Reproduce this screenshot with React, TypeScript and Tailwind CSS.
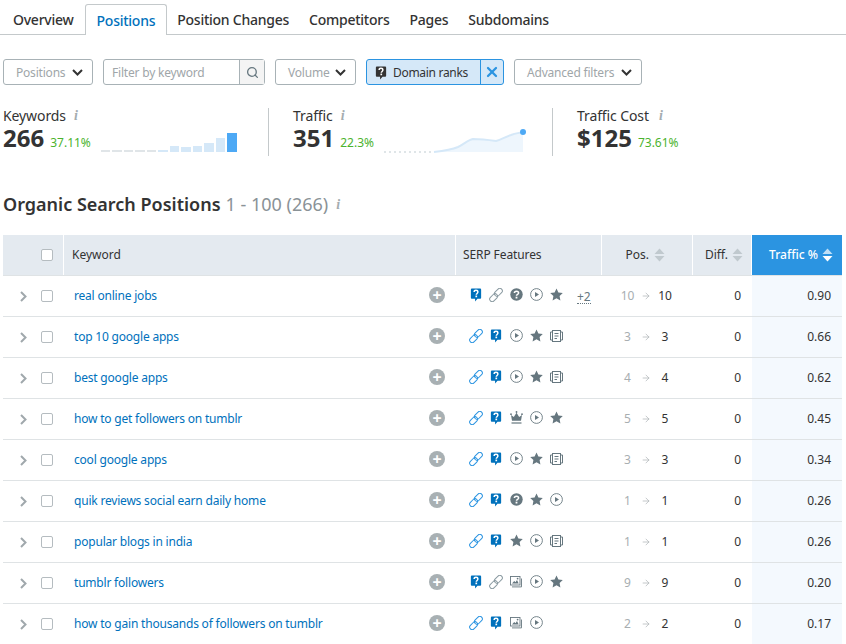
import { ArrowRight, Search, X } from "lucide-react";

type Feature = "link" | "linkOn" | "bubble" | "help" | "play" | "star" | "news" | "image" | "crown";

const rows: { keyword: string; features: Feature[]; more?: string; from: number; to: number; traffic: string }[] = [
  { keyword: "real online jobs", features: ["bubble", "link", "help", "play", "star"], more: "+2", from: 10, to: 10, traffic: "0.90" },
  { keyword: "top 10 google apps", features: ["linkOn", "bubble", "play", "star", "news"], from: 3, to: 3, traffic: "0.66" },
  { keyword: "best google apps", features: ["linkOn", "bubble", "play", "star", "news"], from: 4, to: 4, traffic: "0.62" },
  { keyword: "how to get followers on tumblr", features: ["linkOn", "bubble", "crown", "play", "star"], from: 5, to: 5, traffic: "0.45" },
  { keyword: "cool google apps", features: ["linkOn", "bubble", "play", "star", "news"], from: 3, to: 3, traffic: "0.34" },
  { keyword: "quik reviews social earn daily home", features: ["linkOn", "bubble", "help", "star", "play"], from: 1, to: 1, traffic: "0.26" },
  { keyword: "popular blogs in india", features: ["linkOn", "bubble", "star", "play", "news"], from: 1, to: 1, traffic: "0.26" },
  { keyword: "tumblr followers", features: ["bubble", "link", "image", "play", "star"], from: 9, to: 9, traffic: "0.20" },
  { keyword: "how to gain thousands of followers on tumblr", features: ["linkOn", "bubble", "image", "play"], from: 2, to: 2, traffic: "0.17" },
];

const bars = [2, 2, 2, 2, 2, 2, 6, 5, 6, 9, 14, 19];

function BubbleIcon({ color = "#0071bc" }: { color?: string }) {
  return (
    <svg width="12" height="14" viewBox="0 0 12 15">
      <path d="M1.5 0.5h9a1 1 0 0 1 1 1v9a1 1 0 0 1-1 1H7.6L5 14.5v-3H1.5a1 1 0 0 1-1-1V1.5a1 1 0 0 1 1-1z" fill={color} />
      <path d="M4 4.4c0-2.5 4-2.5 4 0 0 1.5-1.7 1.5-1.7 2.9" fill="none" stroke="#fff" strokeWidth="1.6" />
      <rect x="5.4" y="8.1" width="1.8" height="1.8" fill="#fff" />
    </svg>
  );
}

function FeatureIcon({ name }: { name: Feature }) {
  const grey = "#66777f";
  if (name === "bubble") return <BubbleIcon />;
  if (name === "link" || name === "linkOn") {
    const color = name === "linkOn" ? "#2b94e1" : "#8a9aa1";
    return (
      <svg width="14" height="14" viewBox="0 0 14 14" fill="none" stroke={color} strokeWidth="1">
        <rect x="6.9" y="-0.2" width="5" height="9" rx="2.5" transform="rotate(45 9.4 4.3)" />
        <rect x="2.1" y="5.2" width="5" height="9" rx="2.5" transform="rotate(45 4.6 9.7)" />
      </svg>
    );
  }
  if (name === "help") {
    return (
      <svg width="13" height="13" viewBox="0 0 13 13">
        <circle cx="6.5" cy="6.5" r="6.2" fill={grey} />
        <path d="M4.4 5c0-2.5 4.2-2.5 4.2 0 0 1.5-2.1 1.4-2.1 2.8" fill="none" stroke="#fff" strokeWidth="1.5" />
        <rect x="5.6" y="8.7" width="1.8" height="1.8" fill="#fff" />
      </svg>
    );
  }
  if (name === "play") {
    return (
      <svg width="13" height="13" viewBox="0 0 13 13">
        <circle cx="6.5" cy="6.5" r="5.9" fill="none" stroke={grey} strokeWidth="0.9" />
        <path d="M5 4l4 2.5-4 2.5z" fill={grey} />
      </svg>
    );
  }
  if (name === "star") {
    return (
      <svg width="13" height="13" viewBox="0 0 13 13">
        <path d="M6.5 0.4l1.9 4 4.4 0.6-3.2 3 0.8 4.5-3.9-2.2-3.9 2.2 0.8-4.5-3.2-3 4.4-0.6z" fill={grey} />
      </svg>
    );
  }
  if (name === "news") {
    return (
      <svg width="13" height="12" viewBox="0 0 13 12" fill="none" stroke={grey} strokeWidth="1">
        <rect x="2.5" y="0.5" width="8" height="11" />
        <path d="M2.5 2H0.5v8h2M10.5 2h2v8h-2M4.5 3.5h4M4.5 6h4M4.5 8.5h2.5" />
      </svg>
    );
  }
  if (name === "image") {
    return (
      <svg width="12" height="12" viewBox="0 0 12 12" fill="none" stroke={grey} strokeWidth="0.9">
        <rect x="0.5" y="0.5" width="9.5" height="8.5" />
        <path d="M2 7.5l2.2-2.5 1.3 1.3 1.5-2.3 1.7 3.5z" fill={grey} stroke="none" />
        <circle cx="7.6" cy="2.6" r="0.9" fill={grey} stroke="none" />
        <path d="M2 10.9h9.5V2.5" />
      </svg>
    );
  }
  return (
    <svg width="13" height="13" viewBox="0 0 13 13" fill={grey}>
      <path d="M2 9.8L1 4l2.8 2L6.5 1.8 9.2 6 12 4l-1 5.8z" />
      <circle cx="1" cy="3.2" r="0.9" />
      <circle cx="6.5" cy="1" r="0.9" />
      <circle cx="12" cy="3.2" r="0.9" />
      <rect x="1.5" y="11.4" width="10" height="1.2" />
    </svg>
  );
}

function InfoMark() {
  return <span className="font-['Liberation_Serif',serif] text-[14px] font-bold italic leading-none text-[#a4acb0]">i</span>;
}

function SortArrows({ active }: { active?: boolean }) {
  const color = active ? "#ffffff" : "#c0c9ce";
  return (
    <svg width="11" height="14" viewBox="0 0 11 14" className="shrink-0">
      <path d="M5.5 0.5L10.5 6H0.5z" fill={color} opacity={active ? 0.7 : 1} />
      <path d="M5.5 13.5L10.5 8H0.5z" fill={color} />
    </svg>
  );
}

function Chevron() {
  return (
    <svg width="11" height="7" viewBox="0 0 11 7" fill="none" stroke="#333" strokeWidth="2" className="shrink-0">
      <path d="M1 1l4.5 4.5L10 1" />
    </svg>
  );
}

function Select({ label, width }: { label: string; width: string }) {
  return (
    <div className={`flex h-[26px] items-center justify-between whitespace-nowrap rounded-[3px] border border-[#a8b2b6] pl-3 pr-[9px] ${width}`}>
      <span className="pt-px text-[12px] tracking-[-0.2px] text-[#a0a6a9]">{label}</span>
      <Chevron />
    </div>
  );
}

function Metric({ label, value, pct, gap }: { label: string; value: string; pct: string; gap: string }) {
  return (
    <div className="mb-1 flex flex-col">
      <div className={`flex h-[16px] items-center text-[14px] leading-none tracking-[-0.1px] text-[#333] ${gap}`}>
        <span>{label}</span>
        <InfoMark />
      </div>
      <div className="mt-px flex items-baseline gap-[6px]">
        <span className="text-[24px] font-bold leading-[26px] text-[#333]">{value}</span>
        <span className="text-[12px] text-[#4bb32e]">{pct}</span>
      </div>
    </div>
  );
}

function Tab({ label, active }: { label: string; active?: boolean }) {
  if (active) {
    return (
      <div className="-mb-px flex h-[31px] items-center rounded-t-[3px] border border-b-0 border-[#c4c9cb] bg-white px-[11px] text-[14px] font-medium tracking-[-0.25px] text-[#0071bc]">
        {label}
      </div>
    );
  }
  return <div className="flex h-[30px] items-center px-[10px] text-[14px] font-medium tracking-[-0.25px] text-[#333] first:mr-px">{label}</div>;
}

export default function App() {
  return (
    <div className="h-[644px] w-[846px] overflow-hidden bg-white font-['Noto_Sans',sans-serif]">
      <div className="flex h-[35px] items-end border-b border-[#c4c9cb] pl-[3px]">
        <Tab label="Overview" />
        <Tab label="Positions" active />
        <Tab label="Position Changes" />
        <Tab label="Competitors" />
        <Tab label="Pages" />
        <Tab label="Subdomains" />
      </div>

      <div className="mt-6 flex gap-[10px] pl-[3px]">
        <Select label="Positions" width="w-[90px]" />
        <div className="flex h-[26px] w-[162px] rounded-[3px] border border-[#a8b2b6]">
          <span className="flex flex-1 items-center pl-2 pt-px text-[12px] tracking-[-0.2px] text-[#a0a6a9]">Filter by keyword</span>
          <span className="flex w-[25px] items-center justify-center border-l border-[#a8b2b6] bg-[#f4f4f4]">
            <Search size={13} strokeWidth={2.4} className="text-[#66777f]" />
          </span>
        </div>
        <Select label="Volume" width="w-[81px]" />
        <div className="flex h-[26px] w-[138px] whitespace-nowrap rounded-[3px] border border-[#2b94e1] bg-[#d5e8f8]">
          <span className="flex flex-1 items-center gap-[6px] pl-2 pt-px text-[12px] tracking-[-0.3px] text-[#333]">
            <BubbleIcon color="#333333" />
            Domain ranks
          </span>
          <span className="flex w-[23px] items-center justify-center border-l border-[#2b94e1]">
            <X size={16} strokeWidth={3.4} className="text-[#2b94e1]" />
          </span>
        </div>
        <Select label="Advanced filters" width="w-[128px]" />
      </div>

      <div className="mt-[23px] flex h-[48px] pl-[3px]">
        <div className="flex w-[265px] items-end">
          <Metric label="Keywords" value="266" pct="37.11%" gap="gap-[8px]" />
          <div className="mb-[4px] ml-[10px] flex items-end gap-[2px]">
            {bars.map((h, i) => (
              <div
                key={i}
                className={`w-[9.5px] ${i === 11 ? "bg-[#4da9f5]" : i < 5 ? "bg-[#e0e5e8]" : "bg-[#d5e8f8]"}`}
                style={{ height: h }}
              />
            ))}
          </div>
        </div>
        <div className="flex w-[284px] items-end border-l border-[#c4c9cb] pl-6">
          <Metric label="Traffic" value="351" pct="22.3%" gap="gap-[8px]" />
          <svg width="146" height="26" viewBox="0 0 146 26" className="mb-px ml-[9px]">
            <path d="M51 23 C60 22 68 21 75 18 C81 15 85 11 90 10 C97 10 106 11 113 12 C118 11 122 8 128 6 C132 4.500 136 4 140 3 V23Z" fill="#eef6fd" />
            <path d="M1 23H51" stroke="#dfe5e8" strokeWidth="2" strokeDasharray="2 3" />
            <path d="M51 23 C60 22 68 21 75 18 C81 15 85 11 90 10 C97 10 106 11 113 12 C118 11 122 8 128 6 C132 4.500 136 4 140 3" fill="none" stroke="#d5e8f8" strokeWidth="2" />
            <circle cx="140" cy="3" r="3" fill="#4da9f5" />
          </svg>
        </div>
        <div className="flex items-end border-l border-[#c4c9cb] pl-6">
          <Metric label="Traffic Cost" value="$125" pct="73.61%" gap="gap-[10px]" />
        </div>
      </div>

      <div className="mt-[35px] flex h-[27px] items-center gap-[5px] pl-[3px]">
        <h1 className="text-[18px] font-semibold text-[#333]">Organic Search Positions</h1>
        <span className="text-[18px] text-[#8a9297]">1 - 100 (266)</span>
        <span className="ml-[3px] flex"><InfoMark /></span>
      </div>

      <div className="mt-[17px] ml-[3px] w-[839px]">
        <div className="flex h-[41px] border-b border-[#dfe3e5] text-[12px] text-[#333]">
          <div className="flex w-[61px] items-center border-r border-white bg-[#e4eaf0] pl-[38px]">
            <span className="h-[12px] w-[12px] rounded-[2px] border border-[#b5bcc0] bg-white" />
          </div>
          <div className="flex w-[392px] items-center border-r border-white bg-[#e4eaf0] pl-2">Keyword</div>
          <div className="flex w-[146px] items-center border-r border-white bg-[#e4eaf0] pl-[7px] tracking-[-0.1px]">SERP Features</div>
          <div className="flex w-[91px] items-center justify-end gap-[5px] border-r border-white bg-[#e4eaf0] pr-[27px]">
            Pos. <SortArrows />
          </div>
          <div className="flex w-[59px] items-center justify-end gap-1 border-r border-white bg-[#e4eaf0] pr-[8px]">
            Diff. <SortArrows />
          </div>
          <div className="flex flex-1 items-center justify-end gap-1 bg-[#2b94e1] pr-[9px] font-medium text-white">
            Traffic % <SortArrows active />
          </div>
        </div>

        {rows.map((row) => (
          <div key={row.keyword} className="flex h-[41px] border-b border-[#dfe3e5] text-[12px]">
            <div className="flex w-[61px] items-center gap-[14px] pl-[17px]">
              <svg width="7" height="11" viewBox="0 0 7 11" fill="none" stroke="#a0a8ac" strokeWidth="2" className="shrink-0">
                <path d="M1 1l4.500 4.500L1 10" />
              </svg>
              <span className="h-[12px] w-[12px] rounded-[2px] border border-[#b5bcc0] bg-white" />
            </div>
            <div className="flex w-[392px] items-center justify-between pl-[10px] pr-[11px]">
              <span className="mb-px tracking-[-0.2px] text-[#0071bc]">{row.keyword}</span>
              <span className="mb-[2px] flex h-4 w-4 items-center justify-center rounded-full bg-[#a8b0b3] text-[16px] font-bold leading-none text-white">+</span>
            </div>
            <div className="flex w-[146px] items-center pb-[3px] pl-[10px]">
              {row.features.map((f, i) => (
                <span key={i} className="flex w-5 justify-center">
                  <FeatureIcon name={f} />
                </span>
              ))}
              {row.more && <span className="ml-[11px] mt-1 border-b border-dotted border-[#66777f] text-[12px] leading-[13px] text-[#66777f]">{row.more}</span>}
            </div>
            <div className="flex w-[91px] items-center pb-px pl-[15px]">
              <span className="w-[21px] text-center text-[#a8aeb1]">{row.from}</span>
              <span className="flex w-[16px] justify-center">
                <ArrowRight size={10} strokeWidth={1.6} className="text-[#a8aeb1]" />
              </span>
              <span className="w-[22px] text-center text-[#333]">{row.to}</span>
            </div>
            <div className="flex w-[59px] items-center justify-end pb-px pr-[11px] text-[#333]">0</div>
            <div className="flex flex-1 items-center justify-end bg-[#f4f9fe] pb-px pr-[11px] text-[#333]">{row.traffic}</div>
          </div>
        ))}
      </div>
    </div>
  );
}
